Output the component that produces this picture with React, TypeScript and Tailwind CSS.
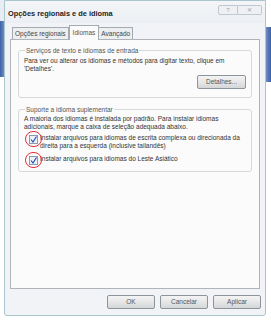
import React from "react";

const font = { fontFamily: '"Liberation Sans", Arial, sans-serif' };

function CircledCheck() {
  return (
    <div className="relative w-[10px] h-[10px] shrink-0 mt-[1px]">
      <div className="w-[9px] h-[9px] border border-[#8a9bb0] bg-[#eef2f8] flex items-center justify-center">
        <svg width="7" height="7" viewBox="0 0 7 7">
          <path d="M1 3.5 L3 6 L6.5 0.5" stroke="#2b4fb0" strokeWidth="1.2" fill="none" />
        </svg>
      </div>
      <div className="absolute -left-[4px] -top-[4px] w-[17px] h-[16px] rounded-full border border-[#e0303a]" />
    </div>
  );
}

function Btn({ label, w }: { label: string; w: string }) {
  return (
    <div
      className={`${w} h-[14px] rounded-[2px] border border-[#8d949c] bg-gradient-to-b from-[#f4f4f4] via-[#e6e6e6] to-[#d4d6d8] flex items-center justify-center text-[6.5px] text-[#555]`}
    >
      {label}
    </div>
  );
}

export default function App() {
  return (
    <div className="w-[271px] h-[320px] bg-white flex overflow-hidden text-[#3a3a3a]" style={font}>
      {/* desktop behind, left */}
      <div className="w-[4px] flex flex-col">
        <div className="h-[21px] bg-[#e8edf3]" />
        <div className="h-[56px] bg-gradient-to-r from-[#3d62a8] to-[#6f8cc4]" />
        <div className="flex-1 bg-white" />
      </div>

      {/* dialog */}
      <div className="w-[262px] h-[316px] flex flex-col border border-[#a9c6cf] rounded-b-[3px] bg-[#f1f3f6]">
        {/* title bar */}
        <div className="h-[22px] flex items-start justify-between pl-[3px] pr-[3px] bg-gradient-to-b from-[#f3f5f8] to-[#eceff3]">
          <span className="mt-[7px] text-[7.4px] font-semibold text-[#1e1e1e]">Opções regionais e de idioma</span>
          <div className="mt-[4px] flex">
            <div className="w-[20px] h-[10px] border border-[#c2c8cf] rounded-l-[2px] bg-[#eef0f3] text-[6px] text-[#a0a6ad] flex items-center justify-center">?</div>
            <div className="w-[24px] h-[10px] border border-l-0 border-[#c2c8cf] rounded-r-[2px] bg-[#eef0f3] text-[6px] text-[#a0a6ad] flex items-center justify-center">✕</div>
          </div>
        </div>

        {/* tabs */}
        <div className="flex items-end pl-[7px] h-[15px] mt-[1px]">
          <div className="h-[12px] px-[2px] border border-b-0 border-[#a4abb3] bg-[#eceef0] text-[6.5px] text-[#444] flex items-center">Opções regionais</div>
          <div className="h-[15px] px-[3px] border border-b-0 border-[#a4abb3] bg-[#fbfbfb] text-[6.5px] text-[#555] flex items-start pt-[2px] -mb-[1px] relative z-10">Idiomas</div>
          <div className="h-[12px] px-[2px] border border-b-0 border-l-0 border-[#a4abb3] bg-[#eceef0] text-[6.5px] text-[#444] flex items-center">Avançado</div>
        </div>

        {/* tab panel */}
        <div className="mx-[5px] h-[250px] border border-[#aeb4ba] bg-[#fbfbfb] px-[7px] pt-[7px] flex flex-col gap-[8px]">
          {/* group 1 */}
          <fieldset className="border border-[#d4d9de] rounded-[3px] px-[5px] pb-[4px] h-[51px]">
            <legend className="text-[6.5px] text-[#555] px-[1px] ml-[1px] leading-[7px]">Serviços de texto e idiomas de entrada</legend>
            <div className="text-[6.5px] leading-[8px] text-[#333] mt-[3px]">
              Para ver ou alterar os idiomas e métodos para digitar texto, clique em 'Detalhes'.
            </div>
            <div className="flex justify-end mt-[2px]">
              <Btn label="Detalhes..." w="w-[49px]" />
            </div>
          </fieldset>

          {/* group 2 */}
          <fieldset className="border border-[#d4d9de] rounded-[3px] px-[5px] pb-[6px] h-[66px]">
            <legend className="text-[6.5px] text-[#555] px-[1px] ml-[1px] leading-[7px]">Suporte a idioma suplementar</legend>
            <div className="text-[6.5px] leading-[8px] text-[#333] mt-[2px]">
              A maioria dos idiomas é instalada por padrão. Para instalar idiomas adicionais, marque a caixa de seleção adequada abaixo.
            </div>
            <div className="flex gap-[1px] mt-[3px] ml-[5px]">
              <CircledCheck />
              <div className="text-[6.5px] leading-[8px] text-[#333]">
                Instalar arquivos para idiomas de escrita complexa ou direcionada da direita para a esquerda (inclusive tailandês)
              </div>
            </div>
            <div className="flex gap-[1px] mt-[5px] ml-[5px]">
              <CircledCheck />
              <div className="text-[6.5px] leading-[8px] text-[#333]">Instalar arquivos para idiomas do Leste Asiático</div>
            </div>
          </fieldset>
        </div>

        {/* buttons */}
        <div className="flex justify-end gap-[5px] pr-[4px] mt-[6px]">
          <Btn label="OK" w="w-[48px]" />
          <Btn label="Cancelar" w="w-[48px]" />
          <Btn label="Aplicar" w="w-[48px]" />
        </div>
      </div>

      {/* desktop behind, right */}
      <div className="w-[5px] flex flex-col">
        <div className="h-[27px] bg-white" />
        <div className="h-[55px] bg-gradient-to-r from-[#6f8cc4] to-[#3d62a8]" />
        <div className="flex-1 bg-white" />
      </div>
    </div>
  );
}
